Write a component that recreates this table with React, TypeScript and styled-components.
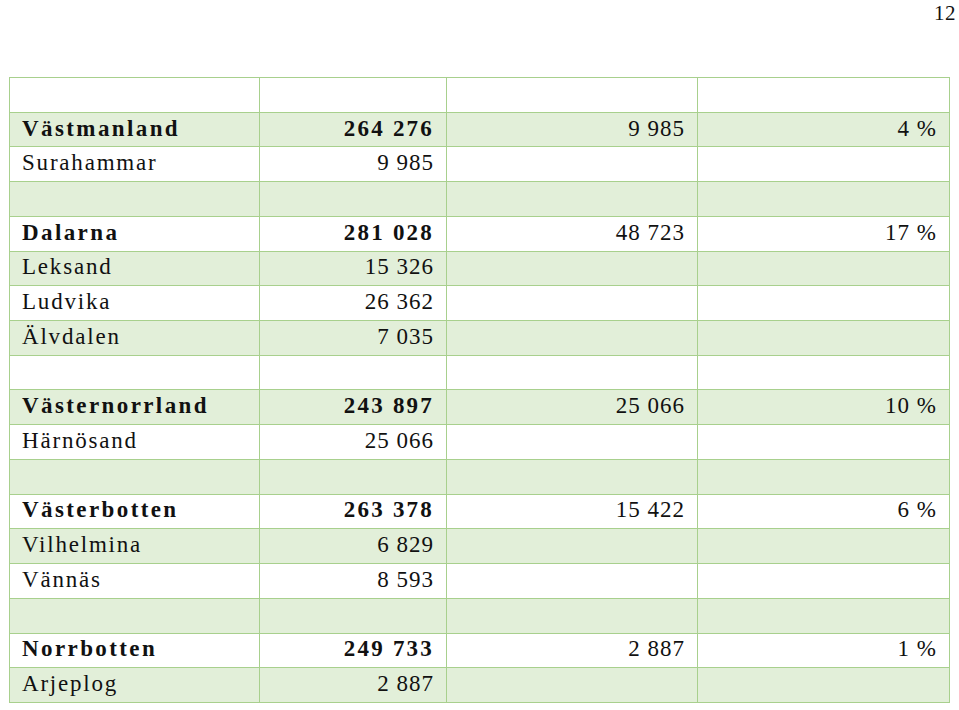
import styled, { createGlobalStyle } from 'styled-components';

type Row = { name?: string; total?: string; sum?: string; share?: string; bold?: boolean };

const rows: Row[] = [
  {},
  { name: 'Västmanland', total: '264 276', sum: '9 985', share: '4 %', bold: true },
  { name: 'Surahammar', total: '9 985' },
  {},
  { name: 'Dalarna', total: '281 028', sum: '48 723', share: '17 %', bold: true },
  { name: 'Leksand', total: '15 326' },
  { name: 'Ludvika', total: '26 362' },
  { name: 'Älvdalen', total: '7 035' },
  {},
  { name: 'Västernorrland', total: '243 897', sum: '25 066', share: '10 %', bold: true },
  { name: 'Härnösand', total: '25 066' },
  {},
  { name: 'Västerbotten', total: '263 378', sum: '15 422', share: '6 %', bold: true },
  { name: 'Vilhelmina', total: '6 829' },
  { name: 'Vännäs', total: '8 593' },
  {},
  { name: 'Norrbotten', total: '249 733', sum: '2 887', share: '1 %', bold: true },
  { name: 'Arjeplog', total: '2 887' },
];

export default function App() {
  return (
    <>
      <GlobalStyle />
      <Page>
        <PageNumber>12</PageNumber>
        <Grid>
          {rows.map((r, i) => (
            <TableRow key={i} $striped={i % 2 === 1}>
              <NameCell $bold={r.bold}>{r.name}</NameCell>
              <NumCell $bold={r.bold}>{r.total}</NumCell>
              <NumCell>{r.sum}</NumCell>
              <NumCell>{r.share}</NumCell>
            </TableRow>
          ))}
        </Grid>
      </Page>
    </>
  );
}

const GlobalStyle = createGlobalStyle`
  body {
    margin: 0;
    background: #fff;
    font-family: "Liberation Serif", serif;
    color: #111;
  }
`;

const Page = styled.div`
  width: 959px;
  height: 710px;
  overflow: hidden;
`;

const PageNumber = styled.div`
  height: 77px;
  box-sizing: border-box;
  padding: 1px 3px 0 0;
  text-align: right;
  font-family: "Liberation Serif", serif;
  font-size: 21px;
  line-height: 24px;
  letter-spacing: 0.5px;
`;

const Grid = styled.div`
  margin-left: 9px;
  width: 941px;
  border-top: 1px solid #a8d08d;
  border-left: 1px solid #a8d08d;
  box-sizing: border-box;
  display: grid;
  grid-template-rows: repeat(18, 34.72px);
`;

const TableRow = styled.div<{ $striped: boolean }>`
  display: grid;
  grid-template-columns: 250px 187px 251px 1fr;
  background: ${p => (p.$striped ? '#e2efd9' : '#fff')};
`;

const Cell = styled.div<{ $bold?: boolean }>`
  display: flex;
  align-items: center;
  border-right: 1px solid #a8d08d;
  border-bottom: 1px solid #a8d08d;
  font-family: "Liberation Serif", serif;
  font-size: 23px;
  font-weight: ${p => (p.$bold ? 700 : 400)};
  white-space: nowrap;
  line-height: 1;
  padding-bottom: 3px;
  color: #111;
`;

const NameCell = styled(Cell)`
  padding-left: 12px;
  letter-spacing: ${p => (p.$bold ? '2.4px' : '1.8px')};
`;

const NumCell = styled(Cell)`
  justify-content: flex-end;
  padding-right: 12px;
  letter-spacing: ${p => (p.$bold ? '2.2px' : '1px')};
`;
